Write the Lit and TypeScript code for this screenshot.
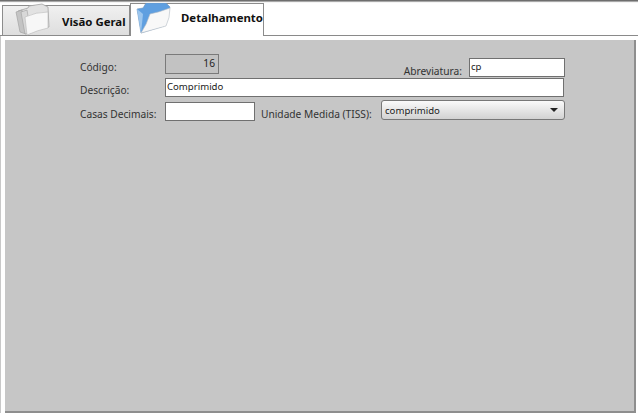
import { LitElement, html, css } from "lit";
import { customElement } from "lit/decorators.js";

@customElement("app-root")
export class AppRoot extends LitElement {
  static styles = css`
    :host { display: block; width: 638px; height: 413px; overflow: hidden; background: #fff; font-family: "Noto Sans", Tahoma, sans-serif; font-size: 10.2px; color: #333; box-sizing: border-box; }
    * { box-sizing: border-box; }
    .topline { height: 3px; background: linear-gradient(#6e6e6e 0 1px, #a8a8a8 1px 2px, #f4f4f4 2px); }
    .tabs { display: flex; height: 33px; padding-left: 2px; align-items: flex-end; border-bottom: 1px solid #8a8a8a; }
    .tab { display: flex; position: relative; font-weight: 700; font-size: 11.4px; color: #111; }
    .tab.off { width: 128px; height: 30px; background: linear-gradient(#f0f0f0, #dedede); border: 1px solid #8c8c8c; border-bottom: none; padding: 8px 0 0 59px; }
    .tab.on { width: 134px; height: 33px; margin-bottom: -1px; background: #fff; border: 1px solid #8c8c8c; border-bottom: none; padding: 6px 0 0 50px; }
    .tab svg { position: absolute; }
    .tab.off svg { left: 11px; top: -3px; }
    .tab.on svg { left: 3px; top: -1px; }
    .panel { height: 377px; padding: 4px 3px 0 4px; background: #fff; border-left: 1px solid #c8c8c8; }
    .content { height: 373px; background: #c6c6c6; border-right: 2px solid #8e8e8e; border-bottom: 2px solid #8e8e8e; padding: 14px 0 0 75px; width: 631px; }
    .form { width: 485px; display: flex; flex-direction: column; }
    .row { display: flex; align-items: flex-start; }
    .r1 { height: 24px; }
    .r2 { height: 23px; }
    label { width: 85px; flex: none; line-height: 15px; }
    .r1 label { padding-top: 6px; }
    .r2 label { padding-top: 5px; }
    .r3 label { padding-top: 6px; }
    .field { flex: none; background: #fff; border: 1px solid #707070; height: 19px; line-height: 15px; padding: 0 0 0 1px; color: #222; font-size: 9.6px; }
    .code { width: 54px; background: #c2c2c2; text-align: right; padding-right: 3px; height: 20px; line-height: 17px; border-color: #7a7a7a; font-size: 10.2px; }
    .abbr-label { margin-left: auto; width: auto; padding-top: 10px !important; }
    .abbr { width: 96px; margin: 4px 0 0 7px; height: 19px; line-height: 16px; }
    .desc { width: 399px; height: 19px; }
    .dec { width: 90px; height: 19px; margin-top: 1px; }
    .unit { width: auto; margin-left: 6px; padding-top: 6px !important; white-space: nowrap; }
    .sel { margin: -1px 0 0 auto; width: 184px; height: 20px; display: flex; align-items: center; justify-content: space-between; padding: 0 6px 0 3px; border-radius: 3px; border: 1px solid #777; background: linear-gradient(#fafafa, #e4e4e4 55%, #d2d2d2); }
    .caret { width: 0; height: 0; border-left: 4px solid transparent; border-right: 4px solid transparent; border-top: 4px solid #222; }
  `;

  private folderOff() {
    return html`<svg width="38" height="33" viewBox="14 3 38 33">
      <path d="M18 11 L28 8 L29 6 L42 4 L48 7 L49 27 L30 30 Z" fill="#e2e2e2" stroke="#a5a5a5" stroke-width=".8"/>
      <path d="M16 12 L22 10 L26 34 L20 32 Z" fill="#c4c4c4" stroke="#9c9c9c" stroke-width=".6"/>
      <path d="M21 12 L27 10 L31 33 L25 34 Z" fill="#d8d8d8" stroke="#a0a0a0" stroke-width=".6"/>
      <path d="M25 17 Q36 12 48 12 L48 28 Q38 30 27 35 Z" fill="#f7f7f7" stroke="#b8b8b8" stroke-width=".6"/>
    </svg>`;
  }

  private folderOn() {
    return html`<svg width="40" height="33" viewBox="134 3 40 33">
      <path d="M137 9 L143 8 L146 3 L166 3 L170 7 L164 26 L141 33 Z" fill="#5f9fe0" stroke="#6f94bb" stroke-width=".6"/>
      <path d="M137 9 L143 14 L141 33 Z" fill="#9cc6ee"/>
      <path d="M150 14 Q160 12 170 8 Q170 18 166 26 L141 33 Q147 24 150 14 Z" fill="#f8f8f8" stroke="#b4bcc4" stroke-width=".6"/>
    </svg>`;
  }

  render() {
    return html`
      <div class="topline"></div>
      <div class="tabs">
        <div class="tab off">${this.folderOff()}Visão Geral</div>
        <div class="tab on">${this.folderOn()}Detalhamento</div>
      </div>
      <div class="panel">
        <div class="content">
          <div class="form">
            <div class="row r1">
              <label>Código:</label>
              <div class="field code">16</div>
              <label class="abbr-label">Abreviatura:</label>
              <div class="field abbr">cp</div>
            </div>
            <div class="row r2">
              <label>Descrição:</label>
              <div class="field desc">Comprimido</div>
            </div>
            <div class="row r3">
              <label>Casas Decimais:</label>
              <div class="field dec"></div>
              <label class="unit">Unidade Medida (TISS):</label>
              <div class="field sel"><span>comprimido</span><span class="caret"></span></div>
            </div>
          </div>
        </div>
      </div>
    `;
  }
}
